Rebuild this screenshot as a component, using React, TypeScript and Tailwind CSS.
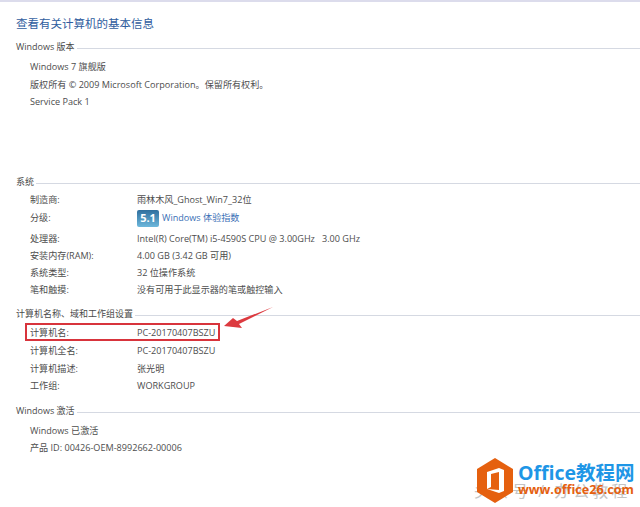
const FONT = "font-['Open_Sans','Noto_Sans_CJK_SC',sans-serif]";

/* ─── Section heading with the rule running to the right ─── */
function SectionHead({ title, className }: { title: string; className: string }) {
  return (
    <div className={`flex h-[14px] items-center pl-4 text-[9px] text-[#4a4a4a] ${className}`}>
      <span className="whitespace-nowrap pr-0.5">{title}</span>
      <div className="mt-[3px] h-px flex-1 bg-[#d5d9e2]" />
    </div>
  );
}

function Row({ label, value, className = "" }: { label: string; value?: React.ReactNode; className?: string }) {
  return (
    <div className={`flex items-center pl-[30px] text-[9.1px] text-[#4d4d4d] ${className}`}>
      <span className="w-[107px] shrink-0 whitespace-nowrap">{label}</span>
      {value && <span className="whitespace-pre">{value}</span>}
    </div>
  );
}

function ScoreBadge() {
  return (
    <span className="mr-[3px] flex h-[17px] w-[22px] items-center justify-center rounded-[2px] bg-gradient-to-b from-[#2f6f9e] to-[#6db8dc] text-[11px] font-bold text-white">
      5.1
    </span>
  );
}

export default function App() {
  return (
    <div className={`relative h-[507px] w-[640px] overflow-hidden border-t-2 border-[#dcdcec] bg-white ${FONT}`}>
      <h1 className="pl-4 pt-[13px] text-[11.5px] font-normal leading-[17px] text-[#2f5d9e]">查看有关计算机的基本信息</h1>

      <SectionHead title="Windows 版本" className="mt-[8px]" />
      <Row label="Windows 7 旗舰版" className="mt-[4px] h-[18px]" />
      <div className="flex h-[18px] items-center whitespace-nowrap pl-[30px] text-[9.1px] text-[#4d4d4d]">
        版权所有 © 2009 Microsoft Corporation。保留所有权利。
      </div>
      <Row label="Service Pack 1" className="h-[16px]" />

      <SectionHead title="系统" className="mt-[65px]" />
      <Row label="制造商:" value="雨林木风_Ghost_Win7_32位" className="mt-[2px] h-[17px]" />
      <Row
        label="分级:"
        value={
          <span className="flex items-center text-[#3a6fb5]">
            <ScoreBadge />
            Windows 体验指数
          </span>
        }
        className="mt-[1px] h-[18px]"
      />
      <Row label="处理器:" value="Intel(R) Core(TM) i5-4590S CPU @ 3.00GHz   3.00 GHz" className="mt-[3px] h-[17px]" />
      <Row label="安装内存(RAM):" value="4.00 GB (3.42 GB 可用)" className="h-[17px]" />
      <Row label="系统类型:" value="32 位操作系统" className="h-[17px]" />
      <Row label="笔和触摸:" value="没有可用于此显示器的笔或触控输入" className="h-[17px]" />

      <SectionHead title="计算机名称、域和工作组设置" className="mt-[9px]" />
      <div className="relative mt-[3px]">
        <Row label="计算机名:" value="PC-20170407BSZU" className="h-[18px]" />
        {/* red annotation drawn over the row */}
        <div className="absolute -top-px left-[25px] h-[18px] w-[195px] border-2 border-[#d8343c]" />
      </div>
      <Row label="计算机全名:" value="PC-20170407BSZU" className="h-[18px]" />
      <Row label="计算机描述:" value="张光明" className="h-[17px]" />
      <Row label="工作组:" value="WORKGROUP" className="h-[17px]" />

      <SectionHead title="Windows 激活" className="mt-[10px]" />
      <Row label="Windows 已激活" className="mt-[4px] h-[17px]" />
      <Row label="产品 ID: 00426-OEM-8992662-00006" className="h-[17px]" />

      {/* arrow annotation */}
      <svg className="absolute left-[220px] top-[301px]" width="58" height="26" viewBox="0 0 58 26">
        <path d="M53 4 L17 18 L13 15 L4 23 L22 25 L19 21 Z" fill="#dc3a3f" />
      </svg>

      {/* watermark + logo */}
      <div className="absolute left-[474px] top-[477px] whitespace-nowrap text-[16px] tracking-[3px] text-[#c4c4c4]">
        头条号 / 办公教程
      </div>
      <svg className="absolute left-[477px] top-[456px]" width="36" height="45" viewBox="0 0 36 45">
        <path d="M18 0 L36 11 L36 34 L18 45 L0 34 L0 11 Z" fill="#e5600f" />
        <path d="M10 14 L22 10 L27 12 L27 33 L22 35 L10 31 L22 32 L22 14 L14 16 L14 29 L10 31 Z" fill="#fff" />
      </svg>
      <div className="absolute left-[518px] top-[458px] whitespace-nowrap text-[19.5px] font-bold leading-[26px] text-[#1e96e6]">
        Office教程网
      </div>
      <div className="absolute left-[518px] top-[479px] whitespace-nowrap text-[12.6px] font-bold leading-[18px] text-[#e5600f]">
        www.office26.com
      </div>
    </div>
  );
}
